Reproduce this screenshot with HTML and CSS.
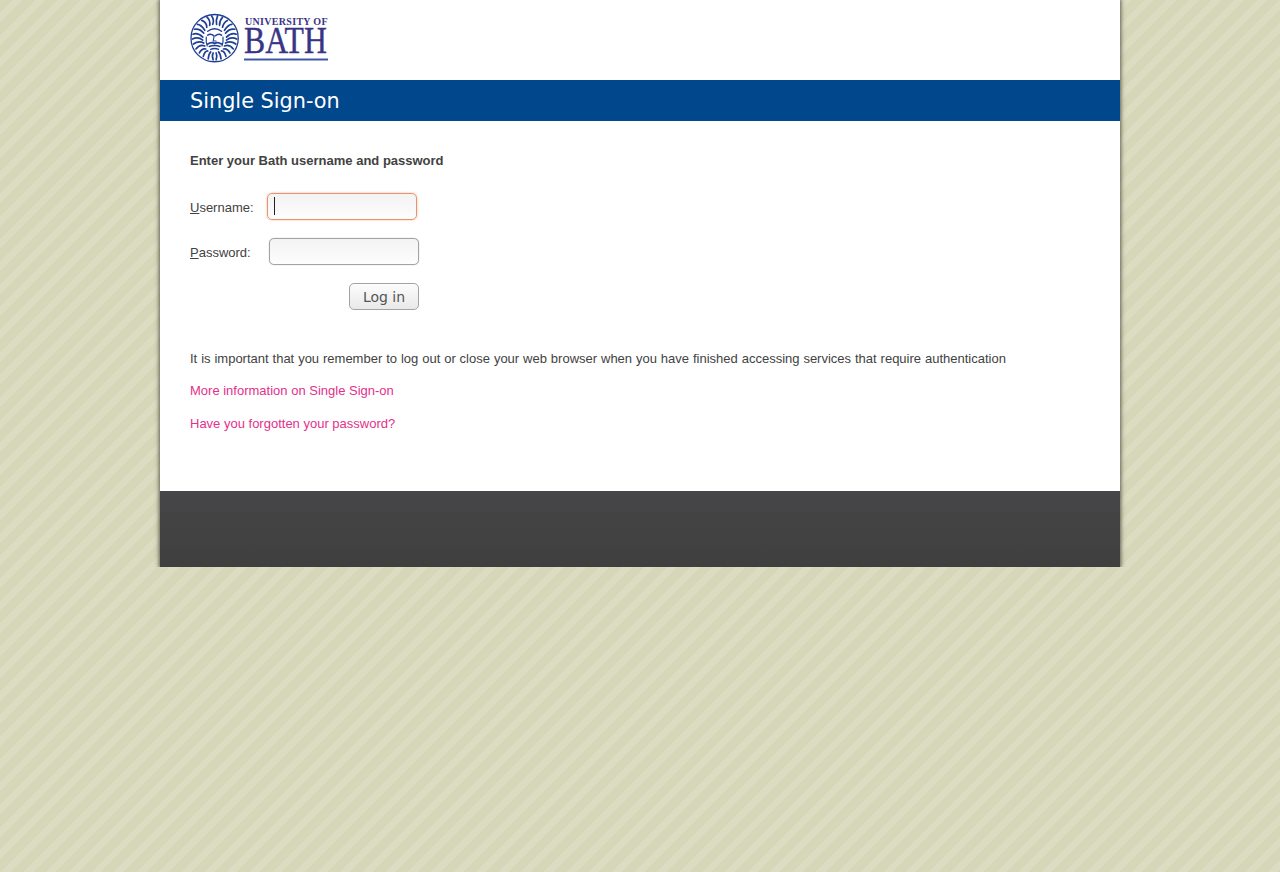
FILE: index.html
```html
<!DOCTYPE html>
<html lang="en">
<head>
    <meta charset="UTF-8">
    <meta name="viewport" content="width=device-width, initial-scale=1.0">
    <title>Single Sign-on</title>
    <link rel="stylesheet" href="styles.css">
</head>
<body>

    <div class="pagina">

        <!-- Logo -->
        <div class="cabecera">
            <svg class="logo" width="140" height="50" viewBox="0 0 140 50" role="img" aria-label="University of Bath">
                <g transform="translate(0 .5) scale(.985)">
                <circle cx="25" cy="25" r="24" fill="#fff" stroke="#1f3f94" stroke-width="1.3"/>
                <!-- pelo y barba -->
                <g fill="none" stroke="#1f3f94" stroke-width="1.7" stroke-linecap="round">
                    <path d="M17 14 Q17 9 12 7"/>
                    <path d="M20 12 Q21 7 17 3.500"/>
                    <path d="M23 11 Q25 7 22 2.500"/>
                    <path d="M27 11 Q26 7 28 2.500"/>
                    <path d="M30 12 Q30 7 33 4"/>
                    <path d="M33 14 Q34 9 38 7"/>
                    <path d="M15 17 Q11 11 7.500 11"/>
                    <path d="M35 17 Q39 11 42.500 11"/>
                    <path d="M14 20 Q10 15 4.500 16"/>
                    <path d="M36 20 Q40 15 45.500 16"/>
                    <path d="M13 24 Q8 19 3 21"/>
                    <path d="M37 24 Q42 19 47 21"/>
                    <path d="M13 27 Q8 23 2.500 26"/>
                    <path d="M37 27 Q42 23 47.500 26"/>
                    <path d="M14 30 Q9 27 3.500 31"/>
                    <path d="M36 30 Q41 27 46.500 31"/>
                    <path d="M15 33 Q10 31 6 36"/>
                    <path d="M35 33 Q40 31 44 36"/>
                    <path d="M16 36 Q12 35 9.500 40"/>
                    <path d="M34 36 Q38 35 40.500 40"/>
                    <path d="M18 38 Q15 38 13.500 43.500"/>
                    <path d="M32 38 Q35 38 36.500 43.500"/>
                    <path d="M21 39 Q19 41 18.500 46"/>
                    <path d="M29 39 Q31 41 31.500 46"/>
                    <path d="M23.500 40 Q22 43 23.500 47"/>
                    <path d="M26.500 40 Q28 43 26.500 47"/>
                </g>
                <!-- cara -->
                <g fill="none" stroke="#1f3f94" stroke-linecap="round">
                    <path d="M18 18 Q25 13 32 18" stroke-width="1.5"/>
                    <path d="M18 22 Q21 20 24 22.500" stroke-width="1.6"/>
                    <path d="M26 22.500 Q29 20 32 22" stroke-width="1.6"/>
                    <path d="M24.500 23 L23.500 28 L26.500 28" stroke-width="1.1"/>
                    <path d="M18 31 Q22 28.500 25 30.500 Q28 28.500 32 31" stroke-width="1.8"/>
                    <path d="M19.500 33.500 Q25 31.500 30.500 33.500" stroke-width="1.4"/>
                    <path d="M21 36.500 Q25 34.500 29 36.500" stroke-width="1.4"/>
                    <path d="M16.500 24 Q16 29 17.500 33" stroke-width="1.2"/>
                    <path d="M33.500 24 Q34 29 32.500 33" stroke-width="1.2"/>
                </g>
                </g>
                <text class="logo-uni" x="55" y="12" textLength="82.500">UNIVERSITY OF</text>
                <text class="logo-bath" transform="translate(54 40.300) scale(.835 1)">BATH</text>
                <rect x="54" y="45.500" width="84" height="2" fill="#3f58a8"/>
            </svg>
        </div>

        <div class="barra">
            <h1>Single Sign-on</h1>
        </div>

        <!-- Formulario de acceso -->
        <div class="contenido">
            <h2>Enter your Bath username and password</h2>

            <form class="acceso">
                <div class="fila fila-usuario">
                    <label for="username"><u>U</u>sername:</label>
                    <div class="campo-caja">
                        <input type="text" id="username" name="username" class="campo campo-activo">
                        <span class="cursor"></span>
                    </div>
                </div>
                <div class="fila">
                    <label for="password"><u>P</u>assword:</label>
                    <input type="password" id="password" name="password" class="campo">
                </div>
                <div class="fila fila-boton">
                    <button type="button" class="boton">Log in</button>
                </div>
            </form>

            <p class="aviso">It is important that you remember to log out or close your web browser when you have finished accessing services that require authentication</p>
            <p class="enlace"><a href="#">More information on Single Sign-on</a></p>
            <p class="enlace"><a href="#">Have you forgotten your password?</a></p>
        </div>

        <div class="pie"></div>
    </div>

</body>
</html>
```

FILE: styles.css
```css
html, body {
    height: 100%;
}
body {
    margin: 0;
    font-family: "Liberation Sans", Arial, sans-serif;
    font-size: 13px;
    color: #424242;
    background-color: #d8d9bc;
    background-image: repeating-linear-gradient(135deg, #d6d7b8 0, #d6d7b8 9px, #dbdcc1 9px, #dbdcc1 16px);
}
.pagina {
    width: 960px;
    margin: 0 auto;
    background-color: #fff;
    box-shadow: 0 0 4px 1px rgba(60, 60, 50, 0.8);
    clip-path: inset(0 -8px);
}
.cabecera {
    height: 80px;
    padding: 13px 0 0 30px;
    box-sizing: border-box;
}
.logo {
    display: block;
    overflow: visible;
}
.logo-uni {
    font-family: "Liberation Serif", serif;
    font-size: 10px;
    font-weight: bold;
    fill: #3a3486;
}
.logo-bath {
    font-family: "Liberation Serif", serif;
    font-size: 38px;
    fill: #3a3486;
    stroke: #3a3486;
    stroke-width: 0.4px;
}
.barra {
    height: 41px;
    background-color: #00478c;
    padding-left: 30px;
}
.barra h1 {
    margin: 0;
    font-family: "DejaVu Sans", sans-serif;
    font-size: 20.800px;
    font-weight: normal;
    line-height: 43px;
    color: #fff;
}
.contenido {
    height: 370px;
    box-sizing: border-box;
    padding: 32px 30px 0;
}
.contenido h2 {
    margin: 0 0 24px;
    font-size: 13px;
    line-height: 16px;
    font-weight: bold;
}
.acceso {
    width: 229px;
    display: flex;
    flex-direction: column;
    gap: 18px;
}
.fila {
    display: flex;
    justify-content: space-between;
    align-items: center;
    height: 27px;
}
.fila label {
    padding-top: 2px;
}
.fila-usuario {
    padding-right: 2px;
}
.fila-boton {
    justify-content: flex-end;
}
.campo-caja {
    position: relative;
    height: 27px;
}
.campo {
    display: block;
    width: 150px;
    height: 27px;
    box-sizing: border-box;
    margin: 0;
    padding: 2px 6px;
    border: 1px solid #a3a3a3;
    border-radius: 5px;
    outline: none;
    background: linear-gradient(#f3f3f3, #fdfdfd);
    box-shadow: 0 0 1px rgba(90, 90, 90, 0.6);
}
.campo-activo {
    border-color: #e9936f;
    box-shadow: 0 0 2px rgba(233, 147, 111, 0.8);
}
.cursor {
    position: absolute;
    left: 7px;
    top: 4px;
    width: 1px;
    height: 18px;
    background-color: #222;
}
.boton {
    width: 70px;
    height: 27px;
    padding: 0;
    font-family: "DejaVu Sans", sans-serif;
    font-size: 14px;
    color: #555;
    border: 1px solid #a3a3a3;
    border-radius: 5px;
    background: linear-gradient(#fcfcfc, #e9e9e9);
    cursor: pointer;
}
.aviso, .enlace {
    margin: 0;
    line-height: 16px;
}
.aviso {
    margin-top: 41px;
    word-spacing: 0.300px;
}
.enlace {
    margin-top: 16px;
}
.enlace + .enlace {
    margin-top: 17px;
}
.enlace a {
    color: #e5308c;
    text-decoration: none;
}
.pie {
    height: 76px;
    background: linear-gradient(#464648, #3f3f3f);
}
```
